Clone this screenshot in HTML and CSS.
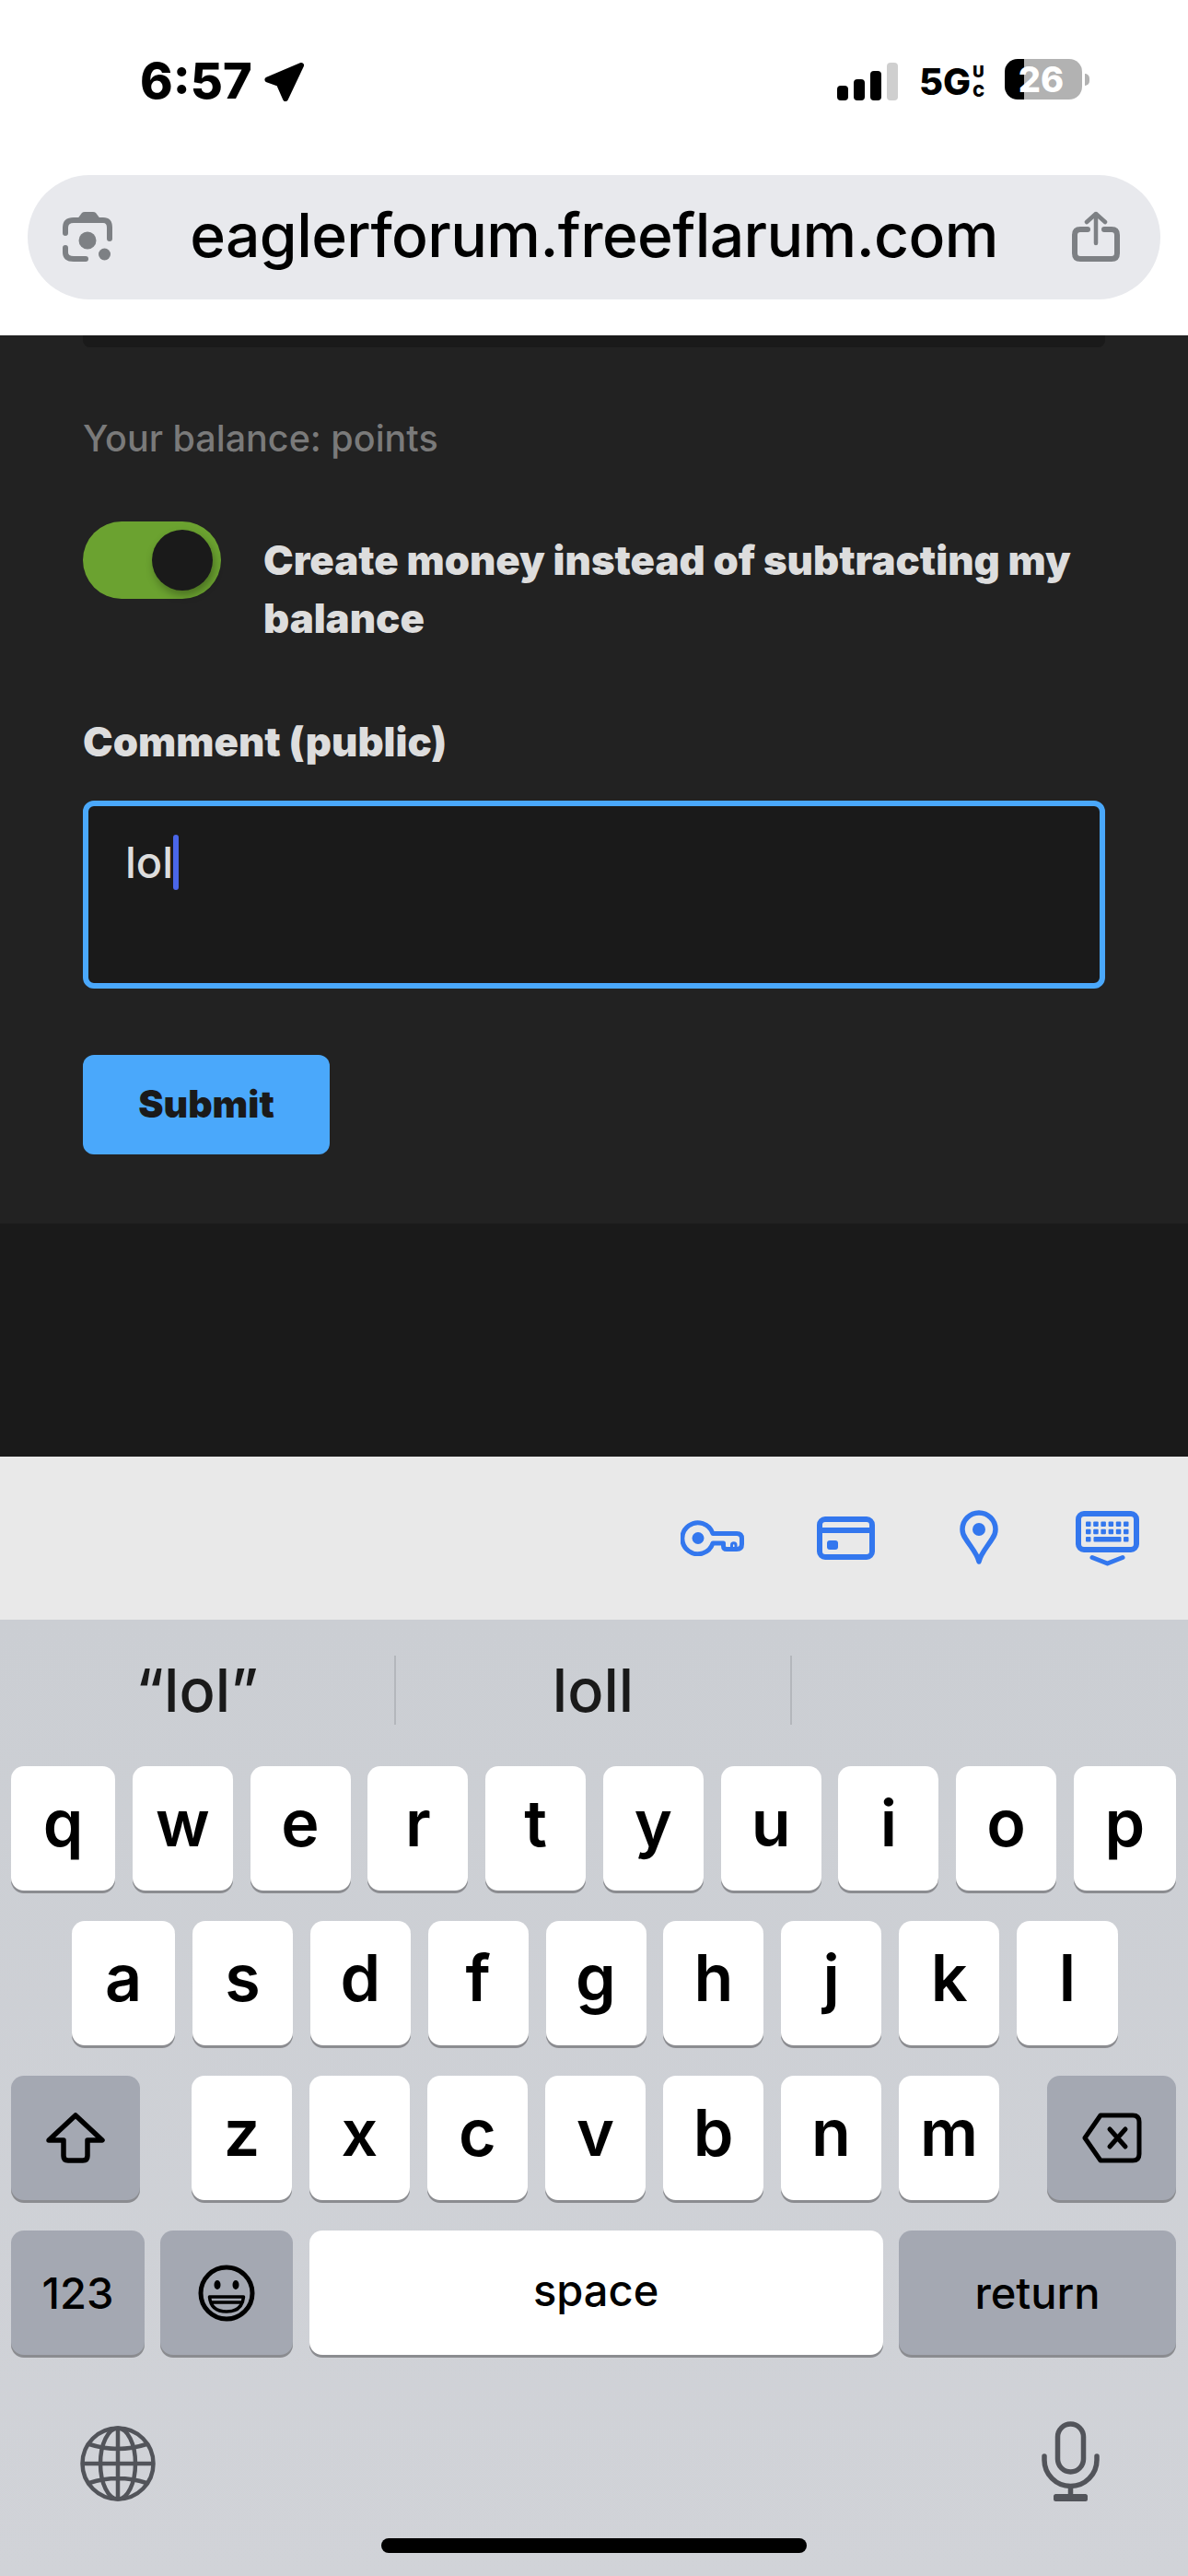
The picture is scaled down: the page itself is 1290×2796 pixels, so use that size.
FILE: index.html
```html
<!DOCTYPE html>
<html lang="en">
<head>
    <meta charset="UTF-8">
    <title>eaglerforum.freeflarum.com</title>
    <link rel="stylesheet" href="styles.css">
</head>
<body>
    <header class="browser-top">
        <div class="status-bar">
            <div class="status-left">
                <span class="clock">6:57</span>
                <svg class="location-arrow" width="44" height="45" viewBox="0 0 44 45"><path d="M40 5 L3.5 20.5 L16 25 L23 41 Z" fill="#000" stroke="#000" stroke-width="6" stroke-linejoin="round"/></svg>
            </div>
            <div class="status-right">
                <div class="signal">
                    <span class="bar bar-1"></span>
                    <span class="bar bar-2"></span>
                    <span class="bar bar-3"></span>
                    <span class="bar bar-4"></span>
                </div>
                <div class="network">
                    <span class="network-main">5G</span>
                    <span class="network-uc">U<br>C</span>
                </div>
                <div class="battery">
                    <div class="battery-body">26</div>
                    <span class="battery-nub"></span>
                </div>
            </div>
        </div>
        <div class="url-bar">
            <svg width="100" height="85" viewBox="0 0 100 85">
                <g fill="none" stroke="#7d8084" stroke-width="6" stroke-linecap="round">
                    <path d="M21 38 V32 Q21 24 30 24 H62 Q69 24 69 32 V44"/>
                    <path d="M21 54 V59 Q21 66 30 66 H43"/>
                </g>
                <path d="M33 24 L39 16 Q40 15 42 15 H51 Q53 15 54 16 L60 24 Z" fill="#7d8084"/>
                <circle cx="45" cy="46" r="9.5" fill="#7d8084"/>
                <circle cx="63.5" cy="61" r="6.5" fill="#7d8084"/>
            </svg>
            <span class="url-text">eaglerforum.freeflarum.com</span>
            <svg width="100" height="85" viewBox="0 0 100 85">
                <g fill="none" stroke="#7d8084" stroke-linecap="round" stroke-linejoin="round">
                    <path d="M50 17 V49 M40 26 L50 17 L60 26" stroke-width="4.5"/>
                    <path d="M41 34 H33 Q27 34 27 40 V60 Q27 66 33 66 H67 Q73 66 73 60 V40 Q73 34 67 34 H59" stroke-width="6"/>
                </g>
            </svg>
        </div>
    </header>

    <main class="page">
        <section class="panel">
            <div class="panel-top-edge"></div>
            <div class="panel-body">
                <p class="balance">Your balance: points</p>
                <div class="toggle-row">
                    <div class="toggle"><span class="toggle-knob"></span></div>
                    <label class="toggle-label">Create money instead of subtracting my balance</label>
                </div>
                <label class="comment-label">Comment (public)</label>
                <div class="comment-box">lol<span class="caret"></span></div>
                <button class="submit-btn" type="button">Submit</button>
            </div>
        </section>
    </main>

    <div class="input-toolbar">
        <svg width="69" height="39" viewBox="0 0 69 39">
            <g fill="none" stroke="#3377ee" stroke-linejoin="round">
                <path d="M35 14.5 H61 Q66.5 14.5 66.5 20 V26 Q66.5 31.5 61 31.5 H50 Q46.5 31.5 46.5 28 V25 H35 A17 17 0 1 1 35 14.5 Z" stroke-width="5"/>
                <path d="M55.5 30 V27 a2.2 2.2 0 0 1 4.5 0 V30" stroke-width="3"/>
            </g>
            <circle cx="19" cy="19.5" r="6.5" fill="#3377ee"/>
        </svg>
        <svg width="63" height="47" viewBox="0 0 63 47">
            <rect x="3" y="3" width="57" height="41" rx="6" fill="none" stroke="#3377ee" stroke-width="6"/>
            <rect x="3" y="12" width="57" height="6" fill="#3377ee"/>
            <rect x="11" y="26" width="12" height="10" rx="3" fill="#3377ee"/>
        </svg>
        <svg width="42" height="61" viewBox="0 0 42 61">
            <path d="M21 56 C19 47 12 40 6.5 31 C3.5 27 3 24 3 21 A18 18 0 0 1 39 21 C39 24 38.5 27 35.5 31 C30 40 23 47 21 56 Z" fill="none" stroke="#3377ee" stroke-width="5.5" stroke-linejoin="round"/>
            <circle cx="21" cy="21" r="7" fill="#3377ee"/>
        </svg>
        <svg width="69" height="60" viewBox="0 0 69 60">
            <rect x="3" y="3" width="63" height="39" rx="6" fill="none" stroke="#3377ee" stroke-width="6"/>
            <g fill="#3377ee">
                <rect x="11" y="11.5" width="5.5" height="5.5" rx="1"/><rect x="19.2" y="11.5" width="5.5" height="5.5" rx="1"/><rect x="27.4" y="11.5" width="5.5" height="5.5" rx="1"/><rect x="35.6" y="11.5" width="5.5" height="5.5" rx="1"/><rect x="43.8" y="11.5" width="5.5" height="5.5" rx="1"/><rect x="52" y="11.5" width="5.5" height="5.5" rx="1"/>
                <rect x="11" y="19.7" width="5.5" height="5.5" rx="1"/><rect x="19.2" y="19.7" width="5.5" height="5.5" rx="1"/><rect x="27.4" y="19.7" width="5.5" height="5.5" rx="1"/><rect x="35.6" y="19.7" width="5.5" height="5.5" rx="1"/><rect x="43.8" y="19.7" width="5.5" height="5.5" rx="1"/><rect x="52" y="19.7" width="5.5" height="5.5" rx="1"/>
                <rect x="11" y="28" width="5.5" height="5.5" rx="1"/><rect x="19.5" y="28" width="30" height="5.5" rx="1"/><rect x="52" y="28" width="5.5" height="5.5" rx="1"/>
            </g>
            <path d="M18 50.5 L34.5 57 L51 50.5" fill="none" stroke="#3377ee" stroke-width="5" stroke-linecap="round" stroke-linejoin="round"/>
        </svg>
    </div>

    <div class="keyboard">
        <div class="suggestions">
            <span class="suggestion">“lol”</span>
            <span class="suggestion">loll</span>
            <span class="suggestion"></span>
        </div>
        <div class="key-rows">
            <div class="key-row">
                <div class="key key-q">q</div><div class="key">w</div><div class="key">e</div><div class="key">r</div><div class="key">t</div><div class="key">y</div><div class="key">u</div><div class="key">i</div><div class="key">o</div><div class="key key-p">p</div>
            </div>
            <div class="key-row key-row-home">
                <div class="key key-a">a</div><div class="key">s</div><div class="key">d</div><div class="key">f</div><div class="key">g</div><div class="key">h</div><div class="key">j</div><div class="key">k</div><div class="key key-l">l</div>
            </div>
            <div class="key-row">
                <div class="key key-fn key-shift">
                    <svg width="64" height="55" viewBox="0 0 64 55"><path d="M32 3 L61 30 H45 V47 Q45 52 40 52 H24 Q19 52 19 47 V30 H3 Z" fill="none" stroke="#000" stroke-width="5.5" stroke-linejoin="round"/></svg>
                </div>
                <div class="letter-group">
                    <div class="key">z</div><div class="key">x</div><div class="key">c</div><div class="key">v</div><div class="key">b</div><div class="key">n</div><div class="key">m</div>
                </div>
                <div class="key key-fn key-shift">
                    <svg width="65" height="55" viewBox="0 0 65 55"><g fill="none" stroke="#000" stroke-width="5" stroke-linejoin="round" stroke-linecap="round"><path d="M20 3 H55 Q62 3 62 10 V45 Q62 52 55 52 H20 L3 27.5 Z"/><path d="M30 18 L47 37 M47 18 L30 37"/></g></svg>
                </div>
            </div>
            <div class="key-row">
                <div class="key key-fn key-label key-123">123</div>
                <div class="key key-fn key-emoji">
                    <svg width="62" height="62" viewBox="0 0 62 62"><circle cx="31" cy="31" r="28" fill="none" stroke="#000" stroke-width="5"/><ellipse cx="21" cy="22" rx="3.5" ry="5"/><ellipse cx="41" cy="22" rx="3.5" ry="5"/><path d="M12.5 35 H49.5 Q48 51 31 51 Q14 51 12.5 35 Z M15 41 H47" fill="none" stroke="#000" stroke-width="3.5" stroke-linejoin="round"/></svg>
                </div>
                <div class="key key-label key-space">space</div>
                <div class="key key-fn key-label key-return">return</div>
            </div>
        </div>
        <div class="keyboard-bottom">
            <svg width="82" height="82" viewBox="0 0 82 82">
                <g fill="none" stroke="#52545a" stroke-width="4.5">
                    <circle cx="41" cy="41" r="38.5"/>
                    <ellipse cx="41" cy="41" rx="19" ry="38.5"/>
                    <path d="M41 3 V79 M3 41 H79 M10 20 Q41 30 72 20 M10 62 Q41 52 72 62"/>
                </g>
            </svg>
            <svg width="63" height="87" viewBox="0 0 63 87">
                <g fill="none" stroke="#52545a" stroke-width="5.5" stroke-linecap="round">
                    <rect x="17.5" y="3" width="28" height="52" rx="14"/>
                    <path d="M3 38 V42 A28.5 28.5 0 0 0 60 42 V38"/>
                    <path d="M31.5 71 V82"/>
                </g>
                <rect x="13" y="79" width="37" height="8" rx="2.5" fill="#52545a"/>
            </svg>
        </div>
        <div class="home-indicator"></div>
    </div>
</body>
</html>
```
FILE: styles.css
```css
body {
    margin: 0;
    width: 1290px;
    height: 2796px;
    overflow: hidden;
    font-family: Inter, "Liberation Sans", sans-serif;
    background-color: #fff;
}

/* browser chrome */
.browser-top {
    height: 364px;
    background-color: #fff;
}

.status-bar {
    height: 190px;
    box-sizing: border-box;
    padding: 64px 107px 0 152px;
    display: flex;
    justify-content: space-between;
    align-items: flex-start;
}

.status-left {
    display: flex;
    align-items: center;
    gap: 13px;
}

.clock {
    font-size: 54px;
    font-weight: 800;
    line-height: 48px;
    color: #000;
}

.status-right {
    display: flex;
    align-items: flex-start;
}

.signal {
    display: flex;
    align-items: flex-end;
    gap: 6px;
    height: 43px;
    margin: 2px 23px 0 0;
}

.bar {
    width: 12px;
    border-radius: 4px;
    background-color: #000;
}

.bar-1 { height: 16px; }
.bar-2 { height: 23px; }
.bar-3 { height: 32px; }
.bar-4 { height: 41px; background-color: #cfcfcf; }

.network {
    display: flex;
    align-items: center;
    width: 93px;
    height: 44px;
    margin-top: 3px;
    gap: 2px;
}

.network-main {
    font-size: 40px;
    font-weight: 800;
    line-height: 44px;
}

.network-uc {
    display: block;
    font-size: 17px;
    font-weight: 900;
    line-height: 21px;
}

.battery {
    display: flex;
    align-items: center;
    gap: 3px;
}

.battery-body {
    width: 84px;
    height: 44px;
    padding-right: 5px;
    box-sizing: border-box;
    border-radius: 14px;
    background: linear-gradient(to right, #000 21px, #b2b2b2 21px);
    color: #fff;
    font-size: 38px;
    font-weight: 800;
    line-height: 44px;
    text-align: center;
}

.battery-nub {
    width: 5px;
    height: 13px;
    border-radius: 0 6px 6px 0;
    background-color: #b2b2b2;
}

.url-bar {
    height: 135px;
    margin: 0 30px;
    padding: 0 20px;
    box-sizing: border-box;
    display: flex;
    align-items: center;
    justify-content: space-between;
    border-radius: 68px;
    background-color: #e8e9ed;
}

.url-text {
    padding-bottom: 6px;
    font-size: 66px;
    font-weight: 500;
    letter-spacing: -0.6px;
    color: #000;
}

/* forum page */
.page {
    height: 1217px;
    background-color: #1a1a1a;
}

.panel {
    height: 964px;
    background-color: #222;
}

.panel-top-edge {
    height: 13px;
    margin: 0 90px;
    border-radius: 0 0 8px 8px;
    background-color: #1a1a1a;
}

.panel-body {
    padding: 0 90px;
}

.balance {
    margin: 0;
    padding-top: 76px;
    font-size: 39.5px;
    font-weight: 500;
    line-height: 46px;
    color: #7a7a7a;
}

.toggle-row {
    display: flex;
    gap: 46px;
    margin-top: 67px;
}

.toggle {
    flex: none;
    display: flex;
    align-items: center;
    justify-content: flex-end;
    width: 150px;
    height: 84px;
    padding-right: 9px;
    box-sizing: border-box;
    border-radius: 42px;
    background-color: #6ba230;
}

.toggle-knob {
    width: 66px;
    height: 66px;
    border-radius: 50%;
    background-color: #1a1a1a;
    box-shadow: 2px 5px 10px rgba(0, 0, 0, 0.3);
}

.toggle-label {
    display: block;
    margin-top: 11px;
    font-size: 43.7px;
    font-weight: 900;
    line-height: 63px;
    color: #ddd;
}

.comment-label {
    display: block;
    margin-top: 78px;
    font-size: 43.7px;
    font-weight: 900;
    line-height: 50px;
    color: #ddd;
}

.comment-box {
    display: flex;
    align-items: flex-start;
    height: 204px;
    margin-top: 38px;
    padding: 31px 40px 0;
    box-sizing: border-box;
    border: 6px solid #4aa8fb;
    border-radius: 12px;
    background-color: #1a1a1a;
    font-size: 47px;
    font-weight: 500;
    line-height: 60px;
    color: #ddd;
}

.caret {
    width: 6px;
    height: 60px;
    border-radius: 3px;
    background-color: #4a66e8;
}

.submit-btn {
    display: block;
    width: 268px;
    height: 108px;
    margin-top: 72px;
    padding: 0 0 2px;
    border: none;
    border-radius: 12px;
    background-color: #4aa8fb;
    color: #1a1a1a;
    font-family: inherit;
    font-size: 41px;
    font-weight: 900;
}

/* autofill bar above the keyboard */
.input-toolbar {
    height: 177px;
    box-sizing: border-box;
    padding-right: 53px;
    display: flex;
    justify-content: flex-end;
    align-items: flex-start;
    background-color: #e9e9e9;
}

.input-toolbar svg:nth-child(1) { margin: 69px 79px 0 0; }
.input-toolbar svg:nth-child(2) { margin: 65px 92px 0 0; }
.input-toolbar svg:nth-child(3) { margin: 58px 84px 0 0; }
.input-toolbar svg:nth-child(4) { margin-top: 59px; }

/* keyboard */
.keyboard {
    height: 1038px;
    background: linear-gradient(to bottom, #cbced3, #d1d3d8);
}

.suggestions {
    height: 159px;
    box-sizing: border-box;
    padding-top: 39px;
    display: flex;
    align-items: flex-start;
}

.suggestion {
    width: 430px;
    height: 75px;
    box-sizing: border-box;
    text-align: center;
    font-size: 65px;
    font-weight: 500;
    line-height: 76px;
    color: #1a1a1a;
    border-right: 2px solid #b4b7bc;
}

.suggestion:last-child {
    border-right: none;
}

.key-rows {
    display: flex;
    flex-direction: column;
    gap: 33px;
    padding: 0 13px 0 12px;
}

.key-row {
    display: flex;
    justify-content: space-between;
}

.key-row-home {
    padding: 0 63px 0 66px;
}

.letter-group {
    display: flex;
    gap: 19px;
    margin-left: 4px;
}

.key {
    display: flex;
    align-items: center;
    justify-content: center;
    width: 109px;
    height: 135px;
    border-radius: 14px;
    background-color: #fff;
    box-shadow: 0 3px 0 #8b8c90;
    color: #000;
    font-size: 70px;
    font-weight: 600;
    padding-bottom: 12px;
    box-sizing: border-box;
}

.key-q { width: 113px; }
.key-p { width: 111px; }
.key-a { width: 112px; }
.key-l { width: 110px; }
.key-fn { background-color: #a4a8b2; padding-bottom: 0; }
.key-shift { width: 140px; }
.key-label { font-size: 47px; font-weight: 500; }
.key-123 { width: 145px; }
.key-emoji { width: 144px; }
.key-space { width: 623px; padding-bottom: 6px; }
.key-return { width: 301px; }

.keyboard-bottom {
    display: flex;
    justify-content: space-between;
    align-items: flex-end;
    height: 159px;
    padding: 0 96px 0 87px;
}

.home-indicator {
    width: 462px;
    height: 16px;
    margin: 40px auto 0;
    border-radius: 8px;
    background-color: #000;
}
```
